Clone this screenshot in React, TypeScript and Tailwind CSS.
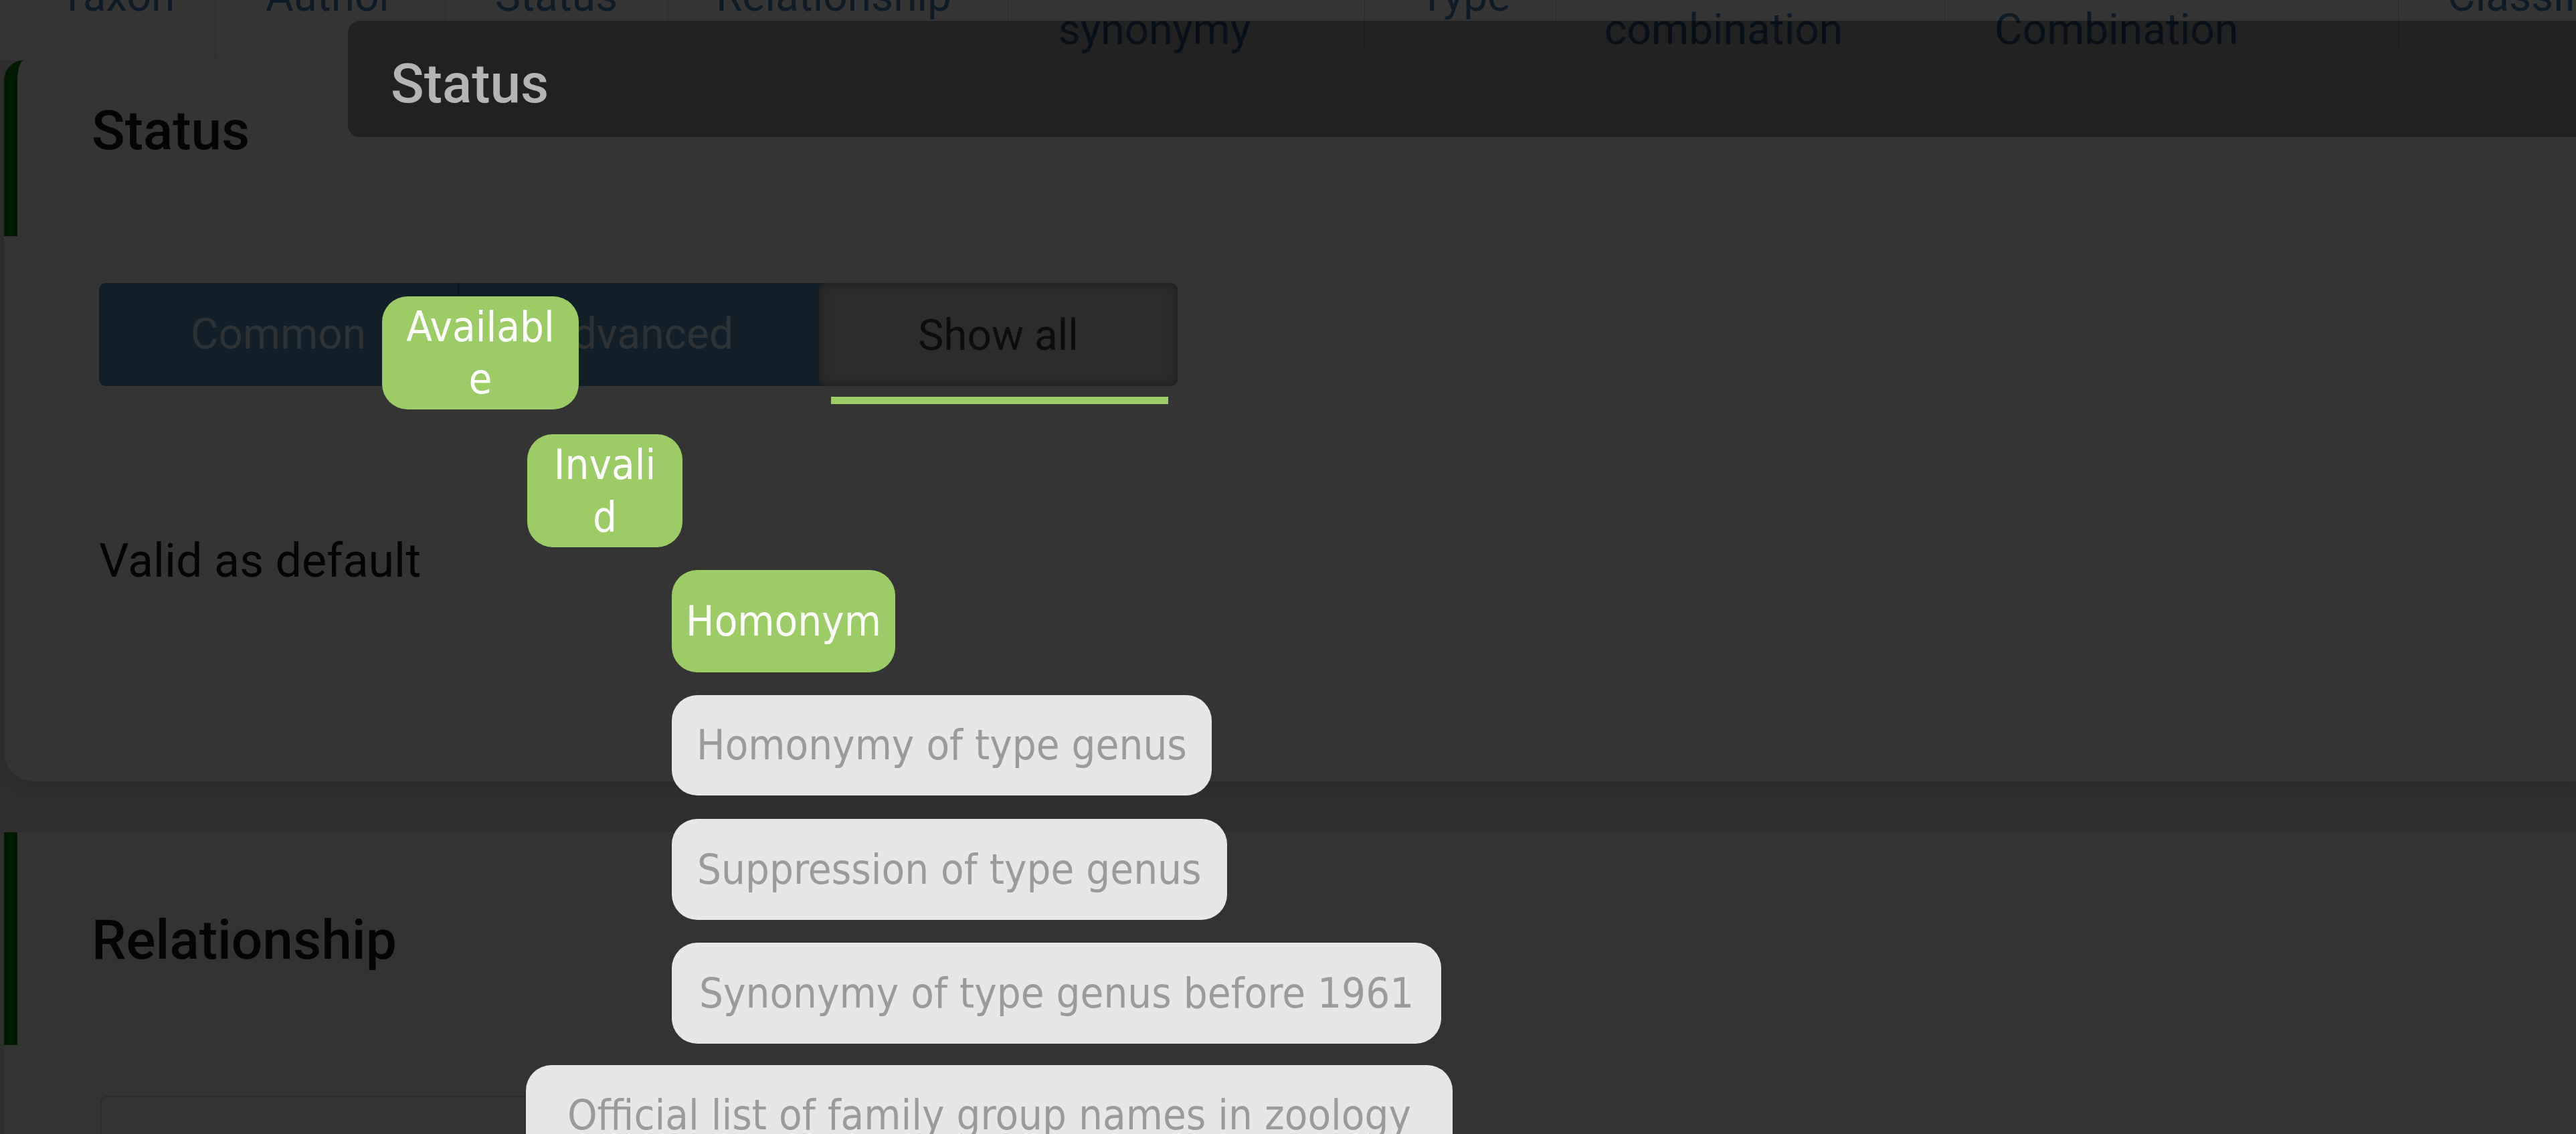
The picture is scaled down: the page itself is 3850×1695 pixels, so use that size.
const HEADER_COLS = [
  { w: "w-[322px]", pl: "pl-[89px]", lines: ["Taxon"] },
  { w: "w-[344px]", pl: "pl-[75px]", lines: ["Author"] },
  { w: "w-[333px]", pl: "pl-[74px]", lines: ["Status"] },
  { w: "w-[508px]", pl: "pl-[71px]", lines: ["Relationship"] },
  { w: "w-[533px]", pl: "pl-[75px]", lines: ["Subjective", "synonymy"] },
  { w: "w-[286px]", pl: "pl-[81px]", lines: ["Type"] },
  { w: "w-[581px]", pl: "pl-[72px]", lines: ["Original", "combination"] },
  { w: "w-[678px]", pl: "pl-[74px]", lines: ["Current", "Combination"] },
  { w: "w-[600px]", pl: "pl-[73px]", lines: ["Classification"] },
];

const chipFont = "font-['DejaVu_Sans_Condensed','DejaVu_Sans',sans-serif] font-stretch-condensed";

function Chip({ label, active, className }: { label: string; active?: boolean; className: string }) {
  return (
    <div
      className={`flex items-center justify-center rounded-[38px] text-center text-[63px] leading-[78px] ${chipFont} ${
        active ? "bg-[#9ccc65] text-white" : "bg-[#e7e7e7] text-[#9b9b9b]"
      } ${className}`}
    >
      {label}
    </div>
  );
}

export default function App() {
  return (
    <div className="relative h-[1695px] w-[3850px] overflow-hidden bg-[#2f2f2f] font-['Roboto','Liberation_Sans',sans-serif]">
      {/* table header, scrolled partly out of view */}
      <div className="-mt-[100px] flex h-[190px] bg-[#353535] text-[64px] leading-[100px] text-[#0e1a25]">
        {HEADER_COLS.map((c, i) => (
          <div key={i} className={`flex shrink-0 flex-col justify-center whitespace-nowrap border-r border-[#2d2d2d] ${c.w} ${c.pl}`}>
            {c.lines.map((l) => (
              <div key={l}>{l}</div>
            ))}
          </div>
        ))}
      </div>

      {/* Status card */}
      <div className="ml-[6px] h-[1078px] rounded-tl-[30px] rounded-bl-[44px] bg-[#343434] shadow-[0_6px_24px_rgba(0,0,0,0.12)]">
        <div className="h-[263px] rounded-tl-[30px] border-l-[20px] border-[#011a01] pl-[111px] pt-[64px] text-[82px] font-medium leading-none text-[#050505]">
          Status
        </div>
        <div className="ml-[142px] mt-[70px]">
          <div className="flex h-[154px] w-[1612px] overflow-hidden rounded-[10px] bg-[#131f28] text-[64px]">
            <div className="flex w-[538px] items-center justify-center border-r-2 border-[#0e171e] text-[#2c3235]">Common</div>
            <div className="flex w-[538px] items-center justify-center text-[#2c3235]">Advanced</div>
            <div className="flex w-[536px] items-center justify-center rounded-[10px] bg-[#2c2c2c] pt-[4px] text-[#0d0d0d] shadow-[inset_0_0_16px_rgba(0,0,0,0.4)]">
              Show all
            </div>
          </div>
          <div className="ml-[1094px] mt-[16px] h-[11px] w-[504px] bg-[#9ccc65]" />
          <div className="mt-[199px] text-[70px] leading-none text-[#050505]">Valid as default</div>
          <div className="mt-[150px] border-b border-[#313131]" />
        </div>
      </div>

      {/* Relationship card */}
      <div className="ml-[6px] mt-[76px] bg-[#333333]">
        <div className="h-[318px] border-l-[20px] border-[#011a01] pl-[111px] pt-[120px] text-[82px] font-medium leading-none text-[#050505]">
          Relationship
        </div>
        <div className="ml-[144px] mt-[76px] h-[220px] w-[1400px] rounded-[10px] border-2 border-[#2c2c2c] pl-[64px] pt-[36px] text-[64px] text-[#0a0a0a]">
          Complete
        </div>
      </div>

      {/* popup header */}
      <div className="absolute left-[520px] right-0 top-[31px] h-[174px] rounded-l-[18px] bg-black/35 pl-[64px] pt-[53px] text-[82px] font-medium leading-none text-[#b4b4b4]">
        Status
      </div>

      {/* popup options */}
      <div className="absolute left-[571px] top-[443px] flex flex-col items-start">
        <Chip label="Available" active className="min-h-[169px] w-[294px] break-all px-[30px]" />
        <Chip label="Invalid" active className="ml-[217px] mt-[37px] min-h-[169px] w-[232px] break-all px-[30px]" />
        <Chip label="Homonym" active className="ml-[433px] mt-[34px] h-[153px] px-[21px]" />
        <Chip label="Homonymy of type genus" className="ml-[433px] mt-[34px] h-[150px] px-[37px]" />
        <Chip label="Suppression of type genus" className="ml-[433px] mt-[35px] h-[151px] px-[38px]" />
        <Chip label="Synonymy of type genus before 1961" className="ml-[433px] mt-[34px] h-[151px] px-[41px]" />
        <Chip label="Official list of family group names in zoology" className="ml-[215px] mt-[32px] h-[150px] px-[62px]" />
      </div>
    </div>
  );
}
